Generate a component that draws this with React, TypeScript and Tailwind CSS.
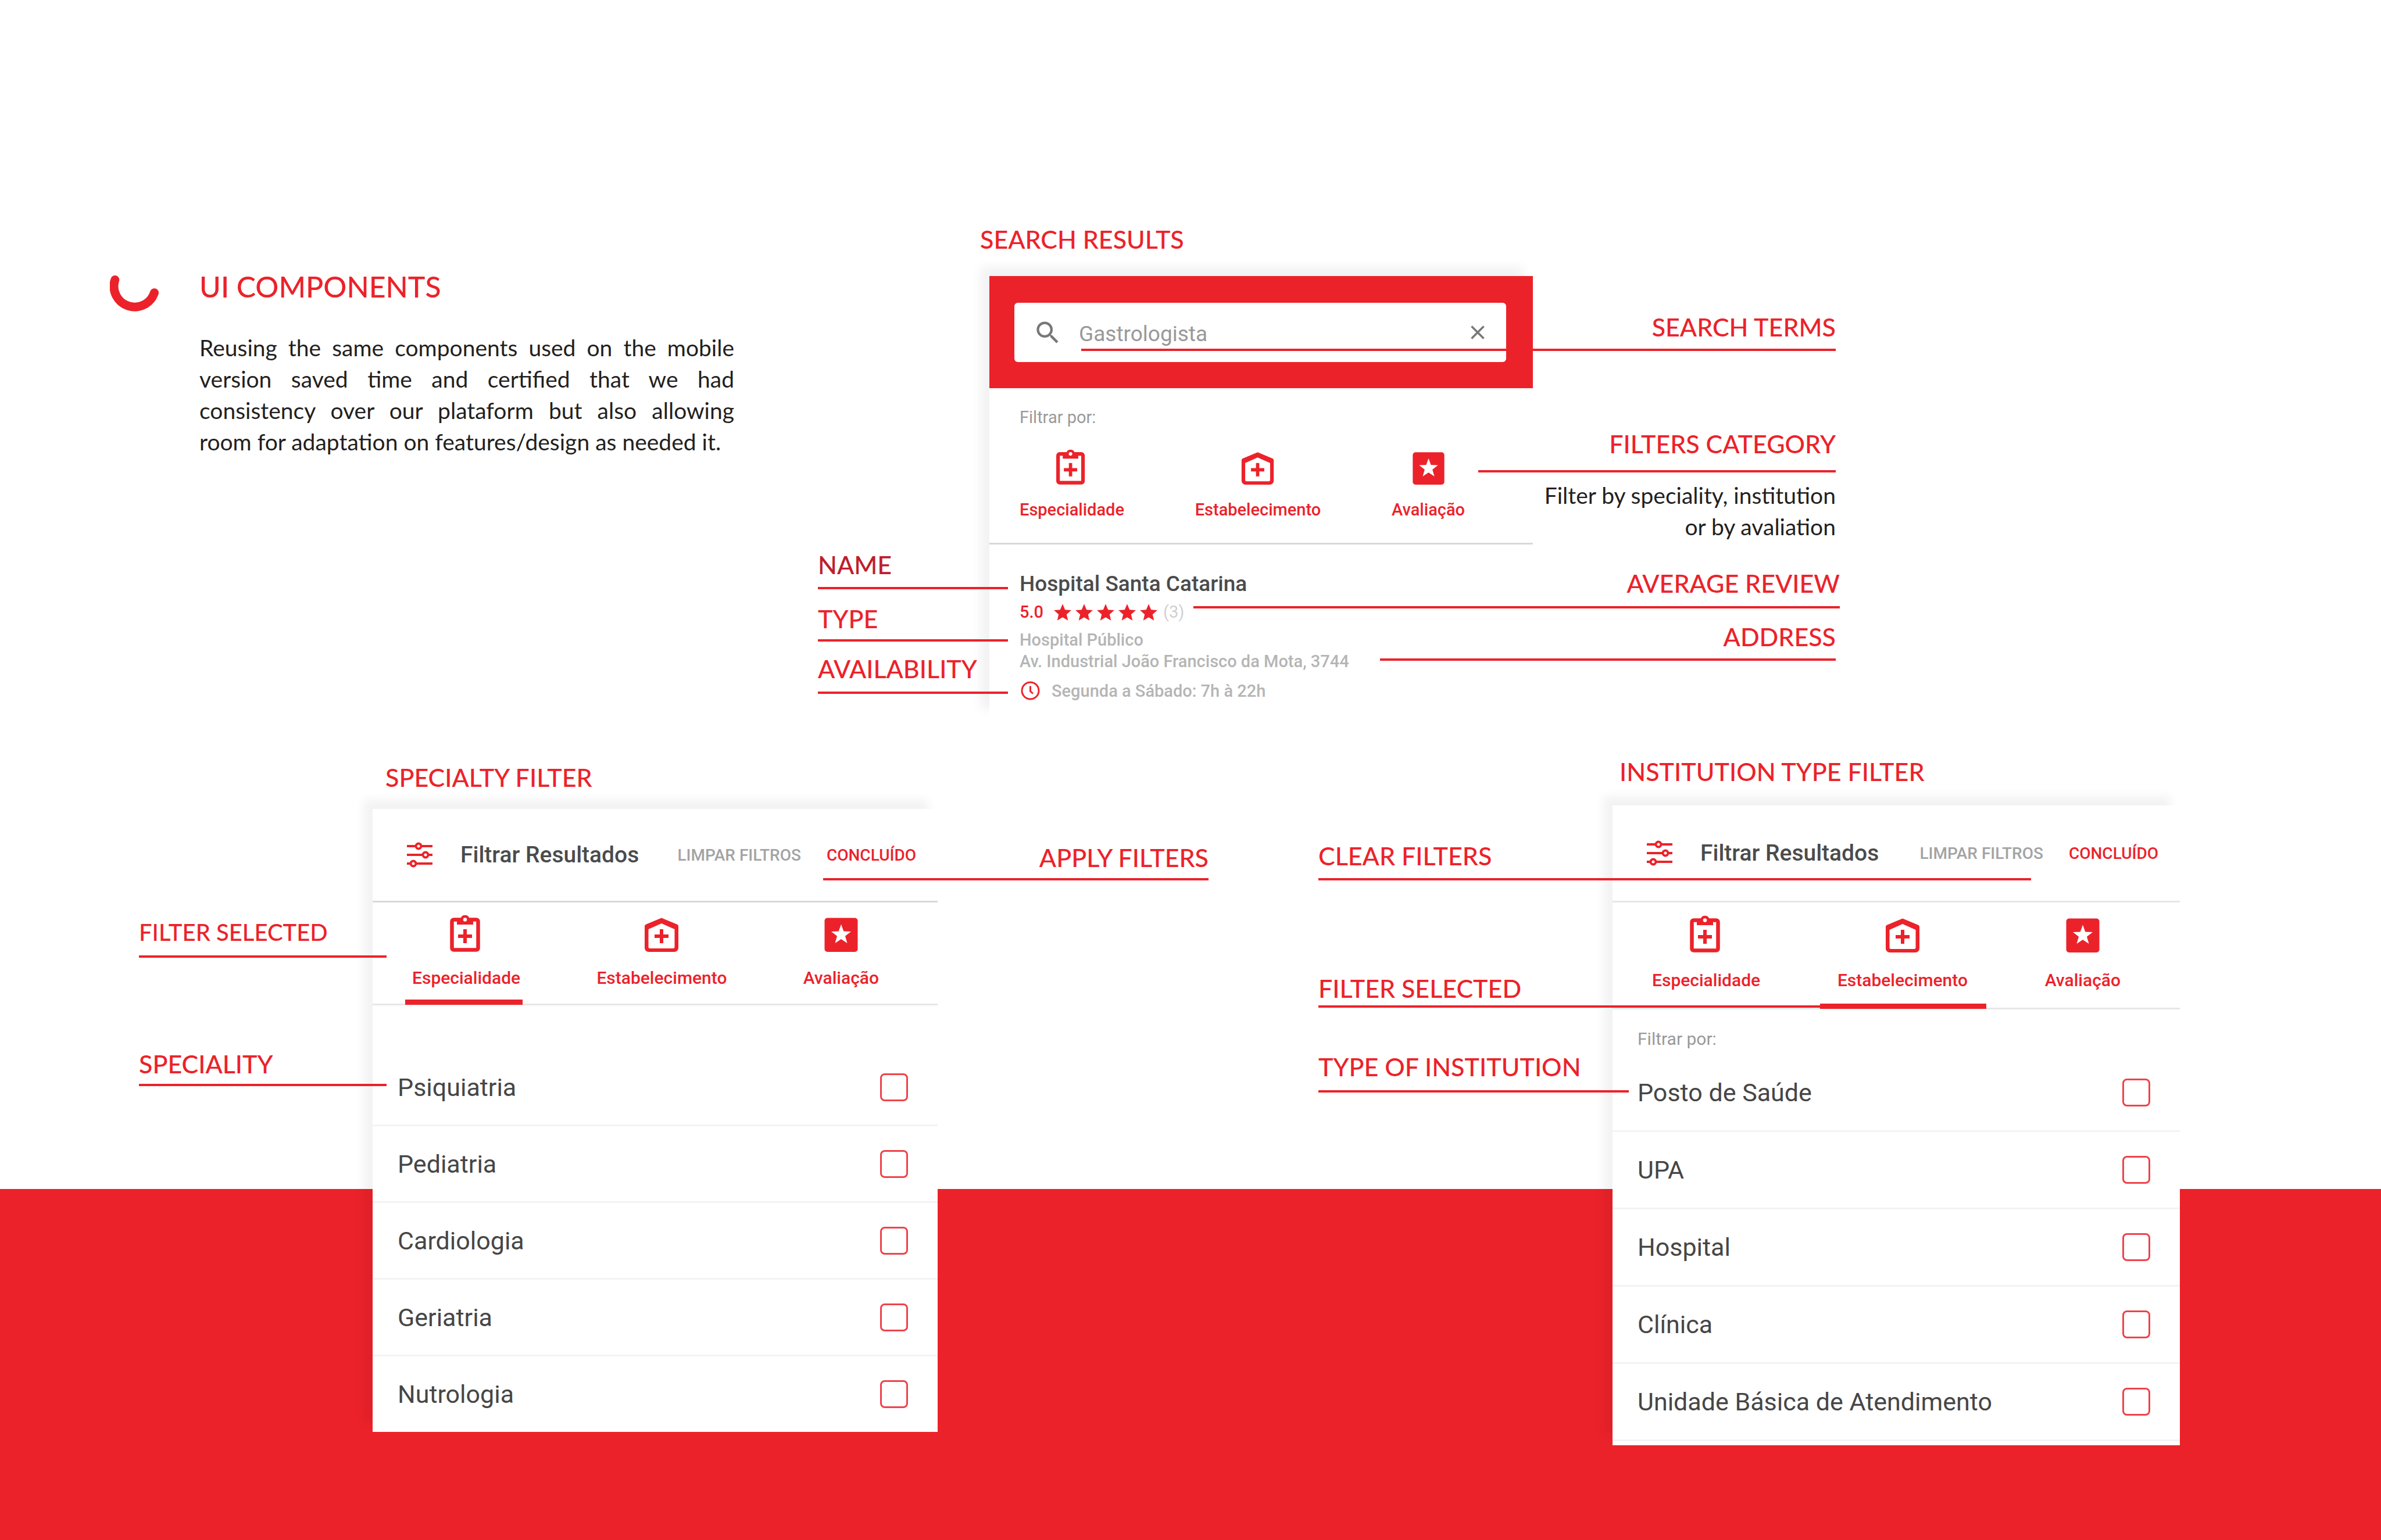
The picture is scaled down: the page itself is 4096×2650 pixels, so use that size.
import type { ReactNode } from "react";

const LABEL_FONT = "font-['Lato',sans-serif]";
const APP_FONT = "font-['Roboto',sans-serif]";
const CARD = "bg-white shadow-[-16px_-16px_16px_rgba(0,0,0,0.05)]";

function ClipboardIcon() {
  return (
    <svg viewBox="0 0 64 64" className="size-full" fill="none" aria-hidden="true">
      <rect x="7.500" y="8.500" width="45" height="52" rx="3" stroke="currentColor" strokeWidth="6.500" />
      <path d="M16 6h6.500a8 8 0 0 1 15 0H44v11H16z" fill="currentColor" />
      <circle cx="30" cy="8.500" r="3.200" fill="#fff" />
      <path d="M30 25v24M18 37h24" stroke="currentColor" strokeWidth="6" />
    </svg>
  );
}

function HouseIcon() {
  return (
    <svg viewBox="0 0 64 64" className="size-full" fill="none" aria-hidden="true">
      <path
        d="M32 5.500 5 16.800Q3 17.700 3 20v37a7 7 0 0 0 7 7h44a7 7 0 0 0 7-7V20Q61 17.700 59 16.800zM32 15l22.500 10v30.500a2.500 2.500 0 0 1-2.500 2.500H12a2.500 2.500 0 0 1-2.500-2.500V25z"
        fill="currentColor"
        fillRule="evenodd"
      />
      <path d="M32 25v24M20 37h24" stroke="currentColor" strokeWidth="6" />
    </svg>
  );
}

function StarBoxIcon() {
  return (
    <svg viewBox="0 0 64 64" className="size-full" aria-hidden="true">
      <rect x="3.500" y="5.500" width="57" height="58.500" rx="5" fill="currentColor" />
      <path
        d="M32 16.500l4.300 11.900 12.700.500-10 7.900 3.500 12.200L32 42 21.500 49l3.500-12.200-10-7.900 12.700-.500z"
        fill="#fff"
      />
    </svg>
  );
}

function SlidersIcon() {
  return (
    <svg viewBox="0 0 44 44" className="size-11 shrink-0" fill="none" stroke="currentColor" strokeWidth="4" aria-hidden="true">
      <path d="M0 7h15M25 7h19M0 22h27M37 22h7M0 37h6M16 37h28" />
      <circle cx="20" cy="7" r="4.500" />
      <circle cx="32" cy="22" r="4.500" />
      <circle cx="11" cy="37" r="4.500" />
    </svg>
  );
}

function SearchIcon() {
  return (
    <svg viewBox="0 0 24 24" className="size-[51px] shrink-0" fill="currentColor" aria-hidden="true">
      <path d="M15.500 14h-.790l-.280-.270A6.471 6.471 0 0 0 16 9.500 6.500 6.500 0 1 0 9.500 16c1.610 0 3.090-.590 4.230-1.570l.270.280v.790l5 4.990L20.490 19l-4.990-5zm-6 0C7.010 14 5 11.990 5 9.500S7.010 5 9.500 5 14 7.010 14 9.500 11.990 14 9.500 14z" />
    </svg>
  );
}

function CloseIcon() {
  return (
    <svg viewBox="0 0 38 38" className="size-[38px]" stroke="currentColor" strokeWidth="3.500" aria-hidden="true">
      <path d="M8.500 8.500l21 21M29.500 8.500l-21 21" />
    </svg>
  );
}

function Star() {
  return (
    <svg viewBox="2 2 20 19" className="h-[29px] w-[30px]" fill="currentColor" aria-hidden="true">
      <path d="M12 17.270 18.180 21l-1.640-7.030L22 9.240l-7.190-.610L12 2 9.190 8.630 2 9.240l5.460 4.730L5.820 21z" />
    </svg>
  );
}

function ClockIcon() {
  return (
    <svg viewBox="0 0 33 33" className="size-[33px]" fill="none" stroke="currentColor" strokeWidth="3" aria-hidden="true">
      <circle cx="16.500" cy="16.500" r="14.500" />
      <path d="M16.500 8.500v9l4.500 4" />
    </svg>
  );
}

const TABS = [
  { name: "Especialidade", icon: <ClipboardIcon /> },
  { name: "Estabelecimento", icon: <HouseIcon /> },
  { name: "Avaliação", icon: <StarBoxIcon /> },
];

function Tabs({ className, iconClass, active, markerClass }: { className: string; iconClass: string; active?: string; markerClass?: string }) {
  return (
    <nav className={"flex justify-between font-medium text-[#ec222a] " + className}>
      {TABS.map((t) => (
        <button key={t.name} type="button" className="relative flex flex-col items-center" aria-pressed={t.name === active}>
          <span className={iconClass}>{t.icon}</span>
          <span>{t.name}</span>
          {t.name === active && <span className={"absolute -bottom-0.5 h-[9px] bg-[#ec222a] " + markerClass} />}
        </button>
      ))}
    </nav>
  );
}

function Title({ children }: { children: ReactNode }) {
  return <h2 className={"pl-[22px] text-[43px] leading-[48px] font-medium whitespace-nowrap text-[#ec222a] " + LABEL_FONT}>{children}</h2>;
}

function Callout({
  children,
  className = "",
  labelClass = "text-[43px] text-[#ec222a]",
  gap,
  line,
  right = false,
}: {
  children: ReactNode;
  className?: string;
  labelClass?: string;
  gap: string;
  line: string;
  right?: boolean;
}) {
  return (
    <div className={className}>
      <p className={(right ? "text-right " : "text-left ") + "leading-[48px] font-medium whitespace-nowrap " + gap + " " + labelClass}>{children}</p>
      <div className={"h-1 bg-[#ec222a] " + line} />
    </div>
  );
}

function FilterHeader({ className }: { className: string }) {
  return (
    <header className={"flex items-center border-b-3 pr-[37px] pl-[59px] text-[#ec222a] " + className}>
      <SlidersIcon />
      <h3 className="ml-12 text-[39px] leading-[46px] font-medium text-[#4b4b4b]">Filtrar Resultados</h3>
      <button type="button" className="ml-auto pt-0.5 text-[28px] leading-8 font-medium text-[#a3a3a3]">
        LIMPAR FILTROS
      </button>
      <button type="button" className="ml-11 pt-0.5 text-[28px] leading-8 font-medium">
        CONCLUÍDO
      </button>
    </header>
  );
}

function Options({ items, rowClass, className }: { items: string[]; rowClass: string; className: string }) {
  return (
    <ul className={className}>
      {items.map((item) => (
        <li key={item} className={"border-[#f3f3f3] " + rowClass}>
          <label className="flex h-full items-center justify-between pr-[51px] pl-[43px] text-[43px] leading-[52px] text-[#464646]">
            {item}
            <input type="checkbox" className="size-12 appearance-none rounded-lg border-3 border-[#ee434b] bg-white" />
          </label>
        </li>
      ))}
    </ul>
  );
}

export default function App() {
  return (
    <main className="min-h-screen overflow-x-hidden bg-[linear-gradient(to_bottom,#ffffff_2046px,#ec222a_2046px)] pt-[388px] pb-[163px]">
      <div className="grid grid-cols-[189fr_1074fr_144fr_295fr_935fr_521fr_938fr] items-start">
        <section className={"col-start-2 mt-[78px] flex min-w-0 " + LABEL_FONT}>
          <svg viewBox="0 0 84 62" className="mt-2 mr-[70px] h-[62px] w-[84px] shrink-0" fill="none" aria-hidden="true">
            <path d="M8.800 7.500A35.600 35.600 0 0 0 76.500 29.700" stroke="#ec222a" strokeWidth="15" strokeLinecap="round" />
          </svg>
          <div className="min-w-0 flex-1">
            <h1 className="text-[50px] leading-[54px] font-medium text-[#ec222a]">UI COMPONENTS</h1>
            <p className="mt-[51px] text-justify text-[39px] leading-[54px] text-[#231f20]">
              Reusing the same components used on the mobile version saved time and certified that we had consistency over our plataform but
              also allowing room for adaptation on features/design as needed it.
            </p>
          </div>
        </section>

        <aside className={"relative z-10 col-start-4 mt-[560px] min-w-0 " + LABEL_FONT}>
          <Callout labelClass="text-[43px] text-[#be1e2d]" gap="mb-3.5" line="-mr-8">
            NAME
          </Callout>
          <Callout className="mt-[27px]" gap="mb-[11px]" line="-mr-8">
            TYPE
          </Callout>
          <Callout className="mt-[23px]" gap="mb-[15px]" line="-mr-8">
            AVAILABILITY
          </Callout>
        </aside>

        <section className="col-start-5 min-w-0">
          <div className="-ml-[38px]">
            <Title>SEARCH RESULTS</Title>
          </div>
          <div className={"mt-[39px] pb-[31px] " + CARD + " " + APP_FONT}>
            <div className="bg-[#ec222a] pt-[46px] pr-[46px] pb-[45px] pl-[43px]">
              <label className="flex h-[102px] items-center rounded-md bg-white pr-[30px] pl-8 text-[#777]">
                <SearchIcon />
                <input
                  type="text"
                  aria-label="Buscar"
                  defaultValue="Gastrologista"
                  className="ml-7 min-w-0 flex-1 pt-1.5 text-[37px] leading-[44px] text-[#999] outline-none"
                />
                <button type="button" aria-label="Limpar">
                  <CloseIcon />
                </button>
              </label>
            </div>
            <p className="mt-[34px] pl-[52px] text-[29px] leading-8 text-[#999]">Filtrar por:</p>
            <Tabs
              className="border-b-3 border-[#d8d8d8] pt-[39px] pr-[117px] pb-[41px] pl-[52px] text-[29px] leading-8"
              iconClass="mb-[27px] size-[61px]"
            />
            <div className="px-[52px]">
              <h3 className="mt-[46px] text-[37px] leading-[44px] font-medium text-[#4b4b4b]">Hospital Santa Catarina</h3>
              <div className="mt-2.5 flex items-center text-[29px] leading-8 text-[#ec222a]">
                <span className="mr-[18px] font-medium">5.0</span>
                <span className="flex gap-[7px]">
                  <Star />
                  <Star />
                  <Star />
                  <Star />
                  <Star />
                </span>
                <span className="ml-2.5 text-[#d0d0d0]">(3)</span>
              </div>
              <p className="mt-3.5 text-[29px] leading-[37px] font-medium text-[#b5b5b5]">
                Hospital Público
                <br />
                Av. Industrial João Francisco da Mota, 3744
              </p>
              <p className="mt-[15px] flex items-center gap-5 pl-0.5 text-[29px] leading-8 font-medium text-[#b5b5b5]">
                <span className="text-[#ec222a]">
                  <ClockIcon />
                </span>
                Segunda a Sábado: 7h à 22h
              </p>
            </div>
          </div>
        </section>

        <aside className={"relative z-10 col-start-6 mt-[151px] min-w-0 " + LABEL_FONT}>
          <Callout right gap="mb-[13px]" line="-ml-[777px]">
            SEARCH TERMS
          </Callout>
          <Callout right className="mt-[136px]" gap="mb-[21px]" line="-ml-[94px]">
            FILTERS CATEGORY
          </Callout>
          <p className="mt-3 text-right text-[39px] leading-[54px] text-[#231f20]">
            Filter by speciality, institution
            <br />
            or by avaliation
          </p>
          <Callout right className="mt-[47px] -mr-[7px]" gap="mb-[15px]" line="-ml-[584px]">
            AVERAGE REVIEW
          </Callout>
          <Callout right className="mt-[25px]" gap="mb-[13px]" line="-ml-[263px]">
            ADDRESS
          </Callout>
        </aside>
      </div>

      <div className="mt-[68px] grid grid-cols-[239fr_402fr_972fr_466fr_189fr_506fr_976fr_346fr] items-start">
        <aside className={"relative z-10 col-start-2 mt-[276px] min-w-0 " + LABEL_FONT}>
          <Callout labelClass="text-[40px] text-[#ec222a]" gap="mb-4" line="-mr-6">
            FILTER SELECTED
          </Callout>
          <Callout className="mt-[159px]" gap="mb-2.5" line="-mr-6">
            SPECIALITY
          </Callout>
        </aside>

        <section className="col-start-3 mt-2.5 min-w-0">
          <Title>SPECIALTY FILTER</Title>
          <div className={"mt-[30px] " + CARD + " " + APP_FONT}>
            <FilterHeader className="h-[161px] border-[#d8d8d8]" />
            <Tabs
              className="border-b-3 border-[#e6e6e6] pt-[21px] pr-[101px] pl-[68px] text-[30px] leading-8 [&>button]:pb-7"
              iconClass="mb-[29px] size-16"
              active="Especialidade"
              markerClass="-left-3 -right-1"
            />
            <Options
              className="pt-[76px]"
              rowClass="h-[132px] border-b-3 last:h-[130px] last:border-b-0"
              items={["Psiquiatria", "Pediatria", "Cardiologia", "Geriatria", "Nutrologia"]}
            />
          </div>
        </section>

        <aside className={"relative z-10 col-start-4 mt-[148px] min-w-0 " + LABEL_FONT}>
          <Callout right gap="mb-[11px]" line="-ml-[197px]">
            APPLY FILTERS
          </Callout>
        </aside>

        <aside className={"relative z-10 col-start-6 mt-[145px] min-w-0 " + LABEL_FONT}>
          <Callout gap="mb-3.5" line="-mr-[720px]">
            CLEAR FILTERS
          </Callout>
          <Callout className="mt-[162px]" gap="mb-[5px]" line="-mr-[358px]">
            FILTER SELECTED
          </Callout>
          <Callout className="mt-[78px]" gap="mb-4" line="-mr-7">
            TYPE OF INSTITUTION
          </Callout>
        </aside>

        <section className="col-start-7 min-w-0">
          <div className="-ml-2.5">
            <Title>INSTITUTION TYPE FILTER</Title>
          </div>
          <div className={"mt-[34px] pb-[7px] " + CARD + " " + APP_FONT}>
            <FilterHeader className="h-[167px] border-[#e6e6e6]" />
            <Tabs
              className="border-b-3 border-[#e6e6e6] pt-[22px] pr-[102px] pl-[68px] text-[30px] leading-8 [&>button]:pb-[31px]"
              iconClass="mb-8 size-16"
              active="Estabelecimento"
              markerClass="-left-[30px] -right-8"
            />
            <p className="mt-[35px] pl-[43px] text-[30px] leading-8 text-[#999]">Filtrar por:</p>
            <Options
              className="pt-[11px]"
              rowClass="h-[133px] border-b-3"
              items={["Posto de Saúde", "UPA", "Hospital", "Clínica", "Unidade Básica de Atendimento"]}
            />
          </div>
        </section>
      </div>
    </main>
  );
}
